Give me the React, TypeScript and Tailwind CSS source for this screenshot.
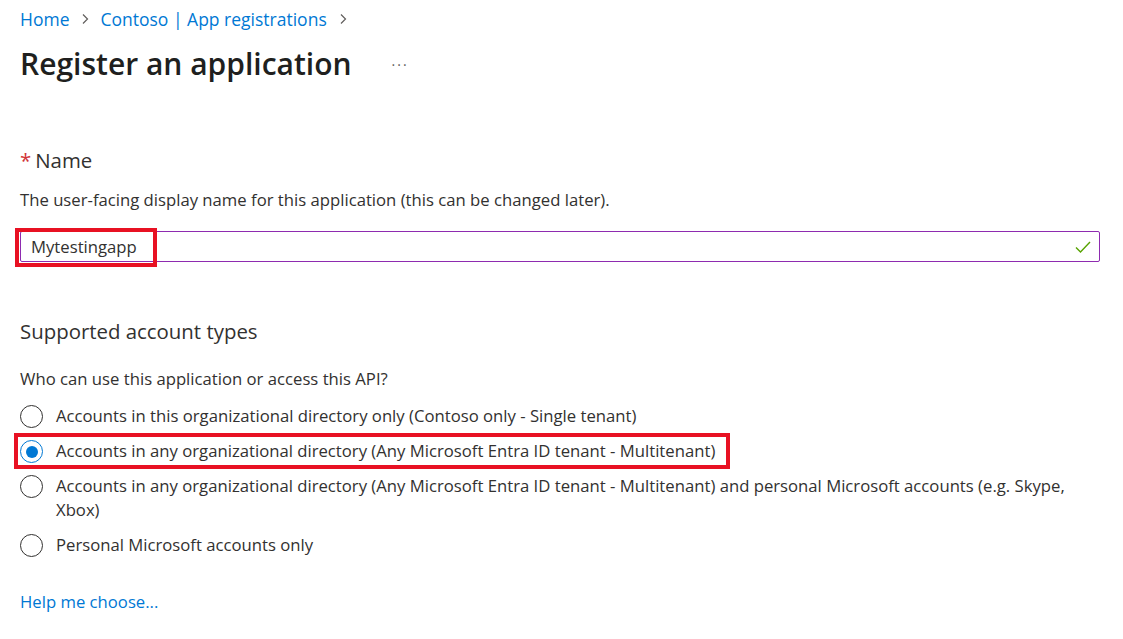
import React from "react";

const OPTIONS = [
	"Accounts in this organizational directory only (Contoso only - Single tenant)",
	"Accounts in any organizational directory (Any Microsoft Entra ID tenant - Multitenant)",
	"Accounts in any organizational directory (Any Microsoft Entra ID tenant - Multitenant) and personal Microsoft accounts (e.g. Skype, Xbox)",
	"Personal Microsoft accounts only",
];

const Chevron = () => (
	<svg width="8" height="12" viewBox="0 0 8 12" className="ml-[12px] mr-[11px]">
		<path d="M2 1.5 L6.5 6 L2 10.5" fill="none" stroke="#605e5c" strokeWidth="1.2" />
	</svg>
);

const Radio = ({ checked }: { checked: boolean }) => (
	<span
		className={`flex h-[23px] w-[23px] shrink-0 items-center justify-center rounded-full border ${
			checked ? "border-[#0078d4]" : "border-[#323130]"
		}`}
	>
		{checked && <span className="h-[12px] w-[12px] rounded-full bg-[#0078d4]"></span>}
	</span>
);

export default function App() {
	return (
		<div
			className="min-h-screen bg-white pl-[20px] pr-[24px] pt-[8px] text-[#323130]"
			style={{ fontFamily: '"Open Sans", "Noto Sans", sans-serif' }}
		>
			{/* Breadcrumb */}
			<nav className="flex items-center text-[17.5px] leading-[22px]">
				<span className="text-[#0078d4]">Home</span>
				<Chevron />
				<span className="text-[#0078d4]">Contoso | App registrations</span>
				<Chevron />
			</nav>

			{/* Title */}
			<div className="mt-[14px] flex items-center">
				<h1 className="text-[30px] font-semibold leading-[40px] text-[#201f1e]">
					Register an application
				</h1>
				<span className="ml-[40px] text-[14px] tracking-[2px] text-[#605e5c]">···</span>
			</div>

			{/* Name */}
			<div className="mt-[62px] text-[20.4px] leading-[28px]">
				<span className="mr-[4px] text-[#d13438]">*</span>
				Name
			</div>
			<p className="mt-[14px] text-[16.7px] leading-[24px]">
				The user-facing display name for this application (this can be changed later).
			</p>
			<div className="relative mt-[19px] flex h-[31px] w-[1080px] items-center rounded-[2px] border border-[#8e2bb0] pl-[10px] pr-[8px] text-[16.7px]">
				<span className="flex-1">Mytestingapp</span>
				<svg width="16" height="14" viewBox="0 0 16 14">
					<path d="M1 7.5 L5.5 12 L15 2" fill="none" stroke="#57a300" strokeWidth="1.4" />
				</svg>
				<span className="absolute left-[-6px] top-[-4px] h-[39px] w-[142px] border-[4px] border-[#e81123]"></span>
			</div>

			{/* Supported account types */}
			<div className="mt-[55px] text-[20.4px] leading-[28px]">Supported account types</div>
			<p className="mt-[22px] text-[16.7px] leading-[24px]">
				Who can use this application or access this API?
			</p>
			<div className="mt-[13px] flex flex-col gap-[11px] text-[16.7px] leading-[24px]">
				{OPTIONS.map((label, i) => (
					<div key={i} className="flex">
						<div className="relative flex items-start gap-[13px]">
							<span className="mt-[1px]">
								<Radio checked={i === 1} />
							</span>
							<span className="pr-[4px]">{label}</span>
							{i === 1 && (
								<span className="pointer-events-none absolute bottom-[-6px] left-[-6px] right-[-11px] top-[-6px] border-[4px] border-[#e81123]"></span>
							)}
						</div>
					</div>
				))}
			</div>

			<div className="mt-[33px] text-[16.7px] leading-[24px] text-[#0078d4]">Help me choose...</div>
		</div>
	);
}
